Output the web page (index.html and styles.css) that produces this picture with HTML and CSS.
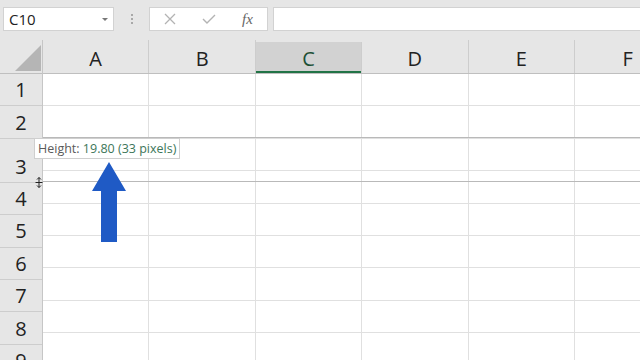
FILE: index.html
```html
<!DOCTYPE html>
<html lang="en">

<head>
    <meta charset="UTF-8">
    <meta name="viewport" content="width=device-width, initial-scale=1.0">
    <title>Row height</title>
    <link rel="stylesheet" href="styles.css">
</head>

<body>
    <div class="toolbar">
        <div class="name-box">
            <span>C10</span>
            <span class="caret"></span>
        </div>
        <div class="grip"><i></i><i></i><i></i></div>
        <div class="fx-buttons">
            <span class="fx-btn">
                <svg width="12" height="12" viewBox="0 0 12 12"><path d="M1 1 L11 11 M11 1 L1 11" stroke="#b3b3b3" stroke-width="1.3" fill="none"/></svg>
            </span>
            <span class="fx-btn">
                <svg width="14" height="12" viewBox="0 0 14 12"><path d="M1 6 L5 10 L13 2" stroke="#b3b3b3" stroke-width="1.4" fill="none"/></svg>
            </span>
            <span class="fx-btn fx-text">fx</span>
        </div>
        <div class="formula-input"></div>
    </div>

    <div class="sheet">
        <div class="row-heads">
            <div class="corner"><span class="corner-tri"></span></div>
            <div class="row-head">1</div>
            <div class="row-head">2</div>
            <div class="row-head tall">3</div>
            <div class="row-head">4</div>
            <div class="row-head">5</div>
            <div class="row-head">6</div>
            <div class="row-head">7</div>
            <div class="row-head">8</div>
            <div class="row-head">9</div>
        </div>

        <div class="grid">
            <div class="col-heads">
                <div class="col-head">A</div>
                <div class="col-head">B</div>
                <div class="col-head sel">C</div>
                <div class="col-head">D</div>
                <div class="col-head">E</div>
                <div class="col-head">F</div>
            </div>
            <div class="row"><div class="cell"></div><div class="cell"></div><div class="cell"></div><div class="cell"></div><div class="cell"></div><div class="cell"></div></div>
            <div class="row"><div class="cell"></div><div class="cell"></div><div class="cell"></div><div class="cell"></div><div class="cell"></div><div class="cell"></div></div>
            <div class="row"><div class="cell"></div><div class="cell"></div><div class="cell"></div><div class="cell"></div><div class="cell"></div><div class="cell"></div></div>
            <div class="row"><div class="cell"></div><div class="cell"></div><div class="cell"></div><div class="cell"></div><div class="cell"></div><div class="cell"></div></div>
            <div class="row"><div class="cell"></div><div class="cell"></div><div class="cell"></div><div class="cell"></div><div class="cell"></div><div class="cell"></div></div>
            <div class="row"><div class="cell"></div><div class="cell"></div><div class="cell"></div><div class="cell"></div><div class="cell"></div><div class="cell"></div></div>
            <div class="row"><div class="cell"></div><div class="cell"></div><div class="cell"></div><div class="cell"></div><div class="cell"></div><div class="cell"></div></div>
            <div class="row"><div class="cell"></div><div class="cell"></div><div class="cell"></div><div class="cell"></div><div class="cell"></div><div class="cell"></div></div>
            <div class="row"><div class="cell"></div><div class="cell"></div><div class="cell"></div><div class="cell"></div><div class="cell"></div><div class="cell"></div></div>
        </div>
    </div>

    <!-- drag preview while resizing row 3 -->
    <div class="drag-line top"></div>
    <div class="drag-line bottom"></div>

    <div class="tooltip">Height: <span class="val">19.80 (33 pixels)</span></div>

    <svg class="resize-cursor" width="8" height="11" viewBox="0 0 8 11">
        <path d="M4 0.5 L4 10.5 M2 2.5 L4 0.5 L6 2.5 M2 8.5 L4 10.5 L6 8.5 M0.5 5.5 L7.5 5.5" stroke="#222" stroke-width="1" fill="none"/>
    </svg>

    <svg class="arrow" width="38" height="84" viewBox="0 0 38 84">
        <polygon points="19,2 2,31 11,31 11,82 27,82 27,31 36,31" fill="#1f5ac5"/>
    </svg>
</body>

</html>
```

FILE: styles.css
```css
body {
    margin: 0;
    width: 640px;
    height: 360px;
    overflow: hidden;
    position: relative;
    font-family: 'Open Sans', 'Noto Sans', sans-serif;
    background-color: #ffffff;
    color: #222;
}

/* formula bar */

.toolbar {
    display: flex;
    align-items: flex-start;
    height: 40px;
    padding: 7px 0 0 3px;
    box-sizing: border-box;
    background-color: #e6e6e6;
}

.name-box {
    width: 111px;
    height: 24px;
    box-sizing: border-box;
    display: flex;
    align-items: center;
    justify-content: space-between;
    padding: 0 5px 0 5px;
    background-color: #ffffff;
    border: 1px solid #d2d2d2;
    font-size: 15px;
}

.caret {
    width: 0;
    height: 0;
    border-left: 3px solid transparent;
    border-right: 3px solid transparent;
    border-top: 3px solid #777;
}

.grip {
    width: 35px;
    height: 24px;
    display: flex;
    flex-direction: column;
    align-items: center;
    justify-content: center;
    gap: 2px;
}

.grip i {
    width: 2px;
    height: 2px;
    background-color: #a8a8a8;
}

.fx-buttons {
    width: 119px;
    height: 24px;
    box-sizing: border-box;
    display: flex;
    background-color: #ffffff;
    border: 1px solid #d2d2d2;
}

.fx-btn {
    width: 39px;
    display: flex;
    align-items: center;
    justify-content: center;
}

.fx-text {
    font-family: 'Liberation Serif', serif;
    font-style: italic;
    font-size: 15px;
    color: #666;
}

.formula-input {
    flex: 1;
    height: 24px;
    margin-left: 5px;
    box-sizing: border-box;
    background-color: #ffffff;
    border: 1px solid #d2d2d2;
    border-right: none;
}

/* sheet */

.sheet {
    display: flex;
}

.row-heads {
    width: 42px;
    flex: none;
    border-right: 1px solid #c6c6c6;
    background-color: #e6e6e6;
}

.corner {
    height: 34px;
    box-sizing: border-box;
    display: flex;
    align-items: flex-end;
    justify-content: flex-end;
    padding: 0 1px 2px 0;
    border-bottom: 1px solid #bfbfbf;
}

.corner-tri {
    width: 0;
    height: 0;
    border-left: 26px solid transparent;
    border-bottom: 26px solid #b5b5b5;
}

.row-head {
    height: 32.4px;
    box-sizing: border-box;
    display: flex;
    align-items: center;
    justify-content: center;
    border-bottom: 1px solid #cdcdcd;
    font-size: 20px;
}

.row-head.tall {
    height: 44px;
    padding-top: 12px;
}

.grid {
    flex: 1;
    overflow: hidden;
}

.col-heads {
    display: flex;
    height: 34px;
    box-sizing: border-box;
    border-bottom: 1px solid #bfbfbf;
    background-color: #e6e6e6;
}

.col-head {
    width: 106.4px;
    flex: none;
    box-sizing: border-box;
    display: flex;
    align-items: center;
    justify-content: center;
    padding-top: 3px;
    border-right: 1px solid #cdcdcd;
    font-size: 20px;
}

.col-head.sel {
    margin-top: 2px;
    background-color: #d2d2d2;
    color: #1d5035;
    box-shadow: inset 0 -2px 0 #217346;
    padding-top: 1px;
}

.row {
    display: flex;
    height: 32.4px;
    box-sizing: border-box;
    border-bottom: 1px solid #e0e0e0;
}

.cell {
    width: 106.4px;
    flex: none;
    box-sizing: border-box;
    border-right: 1px solid #e0e0e0;
}

/* resize overlay */

.drag-line {
    position: absolute;
    left: 43px;
    right: 0;
    height: 1px;
    background-color: #b9b9b9;
}

.drag-line.top {
    top: 137px;
}

.drag-line.bottom {
    top: 181px;
}

.tooltip {
    position: absolute;
    left: 34px;
    top: 138px;
    height: 21px;
    box-sizing: border-box;
    padding: 0 3px;
    background-color: #ffffff;
    border: 1px solid #cfcfcf;
    font-size: 12.5px;
    line-height: 19px;
    color: #5a5a5a;
    white-space: nowrap;
}

.tooltip .val {
    color: #3d7659;
}

.resize-cursor {
    position: absolute;
    left: 35px;
    top: 177px;
}

.arrow {
    position: absolute;
    left: 90px;
    top: 160px;
}
```
